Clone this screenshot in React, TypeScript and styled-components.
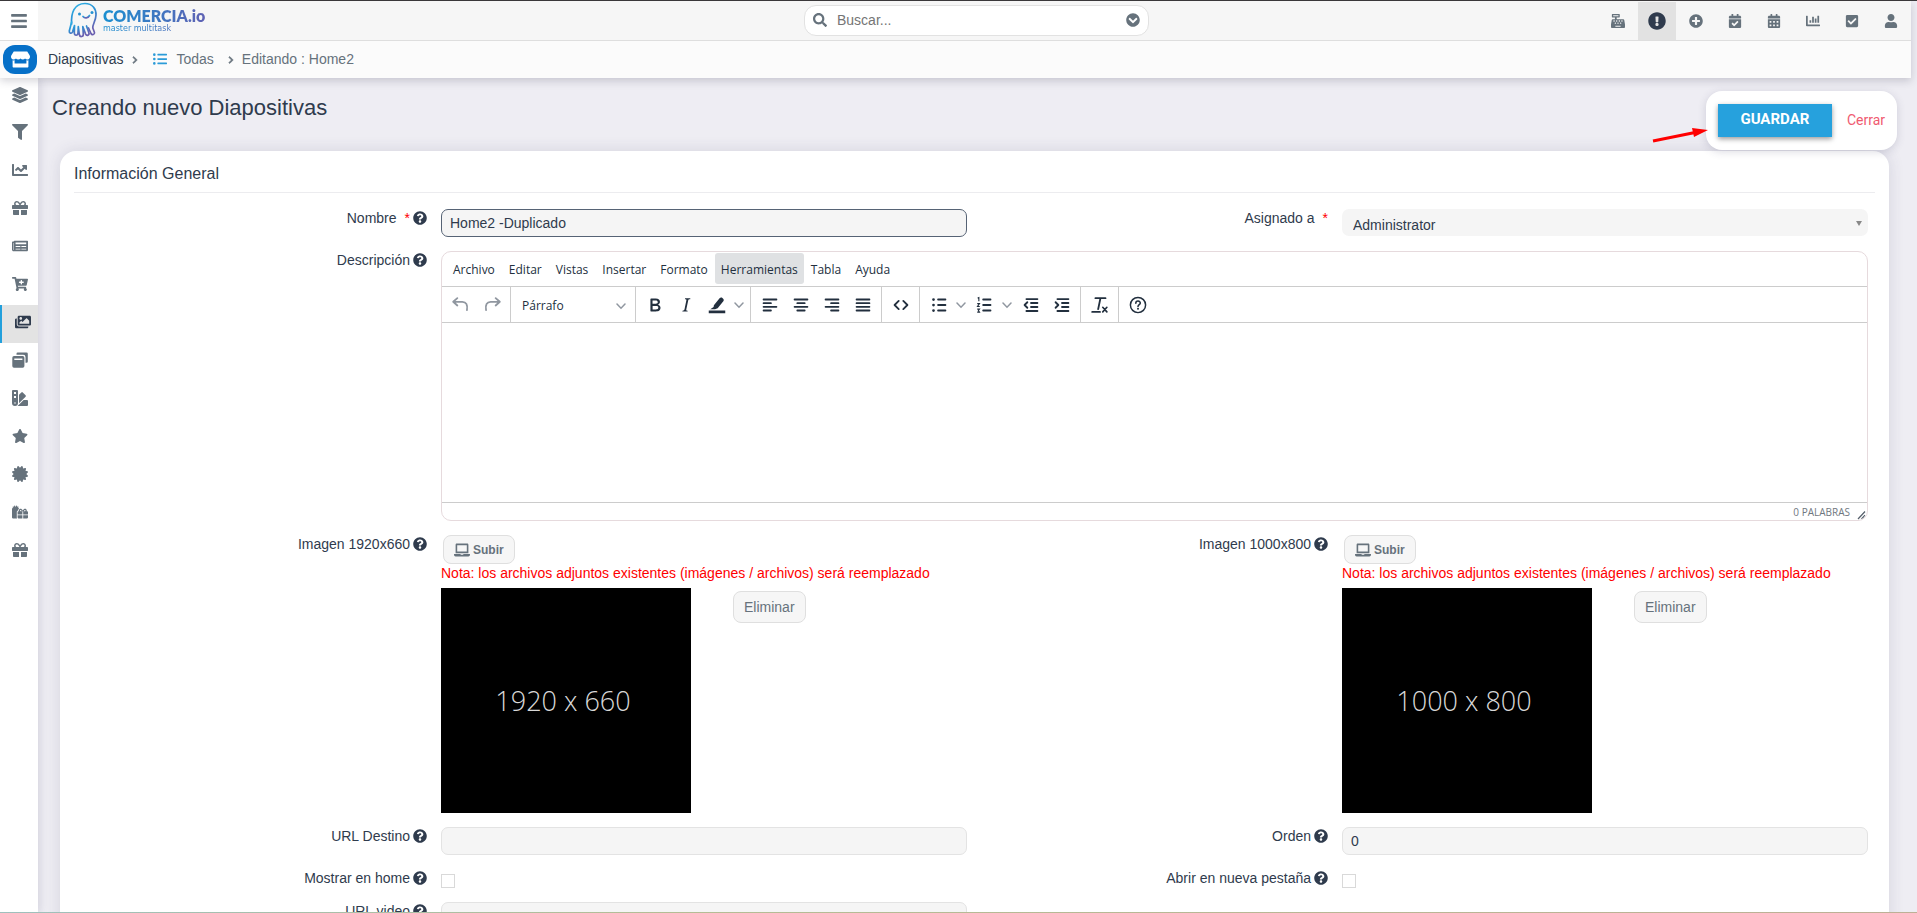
import React from 'react';
import styled, { createGlobalStyle } from 'styled-components';
import {
  FaBars, FaStore, FaLayerGroup, FaFilter, FaChartLine, FaGift, FaNewspaper, FaCartPlus, FaImages,
  FaSwatchbook, FaStar, FaCertificate, FaGifts, FaCashRegister, FaExclamationCircle, FaPlusCircle,
  FaCalendarCheck, FaCalendarAlt, FaChartBar, FaCheckSquare, FaUser, FaSearch, FaChevronCircleDown,
  FaChevronRight, FaListUl, FaQuestionCircle, FaLaptop,
} from 'react-icons/fa';

const sans = '"Liberation Sans", Arial, sans-serif';
const uiSans = '"Open Sans", "Noto Sans", sans-serif';
const ink = '#2f3b4d';
const slate = '#66727c';

const GlobalStyle = createGlobalStyle`
  *, *::before, *::after { box-sizing: border-box; }
  body { margin: 0; background: #eeedf3; color: ${ink}; font: 14px/18px ${sans}; }
  button, input, select, textarea { font: inherit; color: inherit; margin: 0; }
  button { cursor: pointer; }
  a { color: inherit; text-decoration: none; }
`;

const Shell = styled.div`
  display: flex;
  flex-direction: column;
  height: 100vh;
  overflow: hidden;
  border-top: 1px solid #3a383a;
`;

const Header = styled.header`
  position: relative;
  z-index: 3;
  margin-right: 6px;
  box-shadow: 0 3px 8px rgba(60, 60, 80, 0.22);
`;

const TopBar = styled.div`
  display: grid;
  grid-template-columns: 38px 1fr 349px 1fr;
  align-items: center;
  height: 40px;
  background: #f6f6f6;
  border-bottom: 1px solid #dedede;
`;

const MenuButton = styled.button`
  display: flex;
  align-items: center;
  justify-content: center;
  height: 39px;
  padding: 0;
  border: 0;
  background: #fff;
  color: ${slate};
  font-size: 18px;
`;

const Brand = styled.a`
  display: flex;
  align-items: center;
  gap: 5px;
  padding: 0 0 2px 30px;
`;

const BrandText = styled.span`
  display: flex;
  flex-direction: column;
  background: linear-gradient(90deg, #1a8fd0, #5f62b4);
  background-clip: text;
  -webkit-background-clip: text;
  color: transparent;
`;

const BrandName = styled.span`
  font: 800 16px/18px Lato, sans-serif;
`;

const BrandTag = styled.span`
  font: 8px/8px "DejaVu Sans", sans-serif;
`;

const Search = styled.form`
  display: flex;
  align-items: center;
  gap: 10px;
  height: 31px;
  margin-left: 4px;
  padding: 0 8px 1px;
  border: 1px solid #e2e2e2;
  border-radius: 12px;
  background: #fff;
  color: ${slate};
  font-size: 14px;
`;

const SearchInput = styled.input`
  flex: 1;
  min-width: 0;
  padding: 0;
  border: 0;
  outline: 0;
  background: transparent;
  &::placeholder { color: #757575; }
`;

const PlainButton = styled.button`
  display: flex;
  padding: 0;
  border: 0;
  background: transparent;
  color: ${slate};
  font-size: 14px;
`;

const Tools = styled.nav`
  display: flex;
  justify-content: flex-end;
  gap: 1px;
  height: 38px;
  padding-right: 1px;
`;

const ToolButton = styled.button<{ $active?: boolean }>`
  display: flex;
  align-items: center;
  justify-content: center;
  width: 38px;
  height: 38px;
  padding: 0;
  border: 0;
  background: ${(p) => (p.$active ? '#e2e2e2' : 'transparent')};
  color: ${(p) => (p.$active ? ink : slate)};
  font-size: ${(p) => (p.$active ? 18 : 14)}px;
`;

const CrumbBar = styled.nav`
  display: flex;
  align-items: center;
  height: 37px;
  padding-left: 3px;
  background: #fbfbfb;
  color: ${slate};
`;

const StoreBadge = styled.a`
  display: flex;
  align-items: center;
  justify-content: center;
  width: 34px;
  height: 29px;
  margin-right: 11px;
  border-radius: 12px;
  background: #0670c8;
  color: #fff;
  font-size: 19px;
`;

const Crumb = styled.a<{ $strong?: boolean }>`
  display: flex;
  align-items: center;
  gap: 9px;
  padding-bottom: 2px;
  color: ${(p) => (p.$strong ? ink : slate)};
  svg { color: #2b9bd8; }
`;

const CrumbArrow = styled(FaChevronRight)<{ $wide?: boolean }>`
  margin: 0 ${(p) => (p.$wide ? 14 : 7)}px 0 8px;
  font-size: 8px;
  stroke: currentColor;
  stroke-width: 40px;
  &:last-of-type { margin: 0 7px 0 13px; }
`;

const Body = styled.div`
  display: flex;
  flex: 1;
  min-height: 0;
`;

const SideBar = styled.nav`
  position: relative;
  z-index: 2;
  flex: 0 0 38px;
  background: #fff;
  box-shadow: 2px 0 8px rgba(60, 60, 100, 0.14);
`;

const SideLink = styled.a<{ $active?: boolean }>`
  display: flex;
  align-items: center;
  justify-content: center;
  height: 38px;
  padding: 0 0 4px ${(p) => (p.$active ? 6 : 2)}px;
  border-left: ${(p) => (p.$active ? '2px solid #23a0dc' : '0')};
  background: ${(p) => (p.$active ? '#e3e3e3' : 'transparent')};
  color: ${(p) => (p.$active ? ink : slate)};
  font-size: 16px;
  &:first-child { height: 37px; }
`;

const Main = styled.main`
  position: relative;
  flex: 1;
  min-width: 0;
  padding: 14px 28px 0 22px;
  overflow-y: auto;
  scrollbar-width: none;
`;

const PageTitle = styled.h1`
  margin: 0 0 0 -8px;
  padding: 3px 0 30px;
  font-size: 22px;
  line-height: 26px;
  font-weight: 400;
`;

const SaveBox = styled.div`
  position: absolute;
  z-index: 2;
  top: 13px;
  right: 20px;
  display: flex;
  align-items: center;
  gap: 15px;
  height: 59px;
  padding: 0 12px;
  border-radius: 16px;
  background: #fff;
  box-shadow: 0 2px 8px rgba(60, 60, 100, 0.18);
  font-family: Roboto, ${sans};
`;

const SaveButton = styled.button`
  height: 33px;
  width: 114px;
  padding: 0 0 3px;
  border: 0;
  background: #26a1dd;
  color: #fff;
  font-size: 15px;
  font-weight: 700;
  box-shadow: 0 2px 5px rgba(0, 0, 0, 0.4);
`;

const CloseLink = styled.a`
  padding-bottom: 2px;
  color: #f05a70;
`;

const Pointer = styled.svg`
  position: absolute;
  z-index: 3;
  top: 48px;
  right: 208px;
`;

const Card = styled.section`
  padding: 13px 14px 14px;
  min-height: 800px;
  border-radius: 16px 16px 0 0;
  background: #fff;
  box-shadow: 0 0 16px rgba(60, 60, 100, 0.14);
`;

const CardTitle = styled.h2`
  margin: 0 0 16px;
  padding-bottom: 8px;
  border-bottom: 1px solid #ececef;
  font-size: 16px;
  line-height: 20px;
  font-weight: 400;
`;

const Fields = styled.form`
  display: grid;
  grid-template-columns: 353px 1fr 347px 1fr;
  gap: 14px;
  padding-right: 7px;
`;

const LabelCell = styled.div`
  display: flex;
  justify-content: flex-end;
  align-items: center;
  height: 18px;
  gap: 3px;
  svg { font-size: 14px; }
`;

const Required = styled.span`
  padding-left: 5px;
  color: #f00;
`;

const TextInput = styled.input<{ $current?: boolean }>`
  width: 100%;
  height: 28px;
  padding: 0 8px;
  border: 1px solid ${(p) => (p.$current ? '#566375' : '#e3e3e3')};
  border-radius: 7px;
  outline: 0;
  background: #f5f5f5;
`;

const SelectWrap = styled.div`
  position: relative;
  height: 28px;
`;

const SelectInput = styled.select`
  width: 100%;
  height: 27px;
  padding: 4px 11px 0;
  border: 0;
  border-radius: 7px;
  background: #f5f5f5;
  appearance: none;
`;

const SelectArrow = styled.svg`
  position: absolute;
  top: 12px;
  right: 6px;
  pointer-events: none;
`;

const CheckInput = styled.input`
  appearance: none;
  width: 14px;
  height: 14px;
  margin-top: 5px;
  border: 1px solid #d9d9d9;
  background: #fff;
`;

const Editor = styled.div`
  grid-column: 2 / -1;
  display: flex;
  flex-direction: column;
  height: 270px;
  border: 1px solid #e6dadd;
  border-radius: 10px;
  overflow: hidden;
  color: #222f3e;
  font-family: ${uiSans};
  font-size: 12px;
`;

const EditorMenu = styled.div`
  display: flex;
  height: 35px;
  padding: 1px 4px 2px;
  border-bottom: 1px solid #cccccc;
`;

const EditorMenuItem = styled.button<{ $active?: boolean }>`
  padding: 3px ${(p) => (p.$active ? 6 : 7)}px 0;
  border: 0;
  border-radius: 3px;
  background: ${(p) => (p.$active ? '#dfe1e3' : 'transparent')};
`;

const EditorTools = styled.div`
  display: flex;
  height: 36px;
  border-bottom: 1px solid #cccccc;
`;

const ToolGroup = styled.div`
  display: flex;
  align-items: center;
  padding: 0 3px;
  border-right: 1px solid #cccccc;
  &:last-child { border: 0; }
`;

const EditorButton = styled.button<{ $muted?: boolean; $split?: boolean }>`
  display: flex;
  align-items: center;
  justify-content: ${(p) => (p.$split ? 'space-between' : 'center')};
  width: ${(p) => (p.$split ? 46 : 31)}px;
  height: 30px;
  padding: ${(p) => (p.$split ? '0 3px 0 5px' : '0')};
  border: 0;
  background: transparent;
  color: ${(p) => (p.$muted ? '#9097a0' : '#222f3e')};
`;

const BlockButton = styled.button`
  display: flex;
  align-items: center;
  justify-content: space-between;
  width: 118px;
  height: 30px;
  padding: 2px 6px 0 8px;
  border: 0;
  background: transparent;
`;

const EditorText = styled.textarea`
  flex: 1;
  padding: 8px;
  border: 0;
  outline: 0;
  resize: none;
  background: #fff;
`;

const EditorStatus = styled.div`
  display: flex;
  justify-content: flex-end;
  align-items: flex-end;
  gap: 7px;
  height: 18px;
  padding-right: 1px;
  border-top: 1px solid #cccccc;
  color: #6f7780;
  font-size: 10px;
  line-height: 15px;
`;

const UploadCell = styled.div`
  display: flex;
  flex-direction: column;
  align-items: flex-start;
`;

const SoftButton = styled.button<{ $upload?: boolean }>`
  display: flex;
  align-items: center;
  gap: 3px;
  height: ${(p) => (p.$upload ? 29 : 32)}px;
  margin: ${(p) => (p.$upload ? '0 2px' : '3px 0 0')};
  padding: 0 10px;
  border: 1px solid #dfdfdf;
  border-radius: 8px;
  background: #f6f6f6;
  color: ${slate};
  font-size: ${(p) => (p.$upload ? 12 : 14)}px;
  font-weight: ${(p) => (p.$upload ? 700 : 400)};
  svg { font-size: 16px; }
`;

const Note = styled.p`
  margin: 0 0 6px;
  color: #f00;
`;

const PreviewRow = styled.div`
  display: flex;
  align-items: flex-start;
  gap: 42px;
`;

const Preview = styled.div`
  display: flex;
  align-items: center;
  justify-content: center;
  width: 250px;
  height: 225px;
  padding-right: 6px;
  background: #000;
  color: #d8d8d8;
  font: 300 27px/36px "Open Sans", sans-serif;
`;

const BottomLine = styled.div`
  position: fixed;
  z-index: 4;
  left: 0;
  right: 0;
  bottom: 0;
  height: 1px;
  background: linear-gradient(90deg, #9fc0bd, #b4bd95 35%, #bdb096);
`;

const Logo = () => (
  <svg width="30" height="36" viewBox="0 0 30 36" fill="none" aria-hidden="true">
    <defs>
      <linearGradient id="ghost" x1="0" y1="0" x2="0.4" y2="1">
        <stop offset="0" stopColor="#2bb4e6" />
        <stop offset="0.5" stopColor="#2d8fd3" />
        <stop offset="1" stopColor="#6a5fb0" />
      </linearGradient>
    </defs>
    <g stroke="url(#ghost)" strokeWidth="1.7" strokeLinecap="round" strokeLinejoin="round">
      <path d="M3.6 22C3 11 6 1.5 17 1.5C24.500 1.500 28.300 7 28 13C27.800 19 24.500 22 24.800 26L26.500 30.500C26.800 32.500 24 33.500 23 31.500L20.500 26" />
      <path d="M3.600 20L1.300 29C1 31.500 3.700 32 4.500 30L6.500 23.500L6.300 31C6.500 34 9.700 34 10 31L10.300 24.500L11.300 32.500C11.800 35.500 15.500 35 15.300 32L14.800 24.500L17.500 31.800C18.800 34.500 21.800 33 20.800 30.500L18.500 24" />
      <path d="M15 14.500C16.500 16.500 20 16.500 21.500 13.500" />
    </g>
    <circle cx="11.500" cy="12" r="1.500" fill="#2492d2" />
    <circle cx="24" cy="10.500" r="1.500" fill="#2492d2" />
  </svg>
);

const StackedCards = () => (
  <svg width="16" height="16" viewBox="0 0 16 16" fill="currentColor" aria-hidden="true">
    <path d="M6 0.500H14.500A1.300 1.300 0 0 1 15.800 1.800V9.500A1.300 1.300 0 0 1 14.500 10.800H13.500V5A2.300 2.300 0 0 0 11.200 2.700H4.500V1.800A1.300 1.300 0 0 1 6 0.500Z" />
    <path fillRule="evenodd" d="M2 4H10.700A1.700 1.700 0 0 1 12.400 5.700V14A1.700 1.700 0 0 1 10.700 15.700H2A1.700 1.700 0 0 1 0.300 14V5.700A1.700 1.700 0 0 1 2 4ZM2.300 6.500V8H10.400V6.500Z" />
  </svg>
);

const Ico = ({ children }: { children: React.ReactNode }) => (
  <svg width="22" height="22" viewBox="0 0 24 24" fill="currentColor" aria-hidden="true">{children}</svg>
);

const Stroke = ({ d }: { d: string }) => (
  <Ico><path d={d} fill="none" stroke="currentColor" strokeWidth="2" strokeLinecap="round" strokeLinejoin="round" /></Ico>
);

const Caret = () => (
  <svg width="10" height="10" viewBox="0 0 10 10" fill="none" stroke="#9097a0" strokeWidth="1.500" aria-hidden="true">
    <path d="M1 3L5 7.200L9 3" strokeLinecap="round" />
  </svg>
);

const icons = {
  undo: <Stroke d="M8 4.500L3.500 8.500L8 12.500M4 8.500H13.500C17.500 8.500 19.500 11.500 18.500 17.500" />,
  redo: <Stroke d="M16 4.500L20.500 8.500L16 12.500M20 8.500H10.500C6.500 8.500 4.500 11.500 5.500 17.500" />,
  bold: <Ico><path d="M7.800 19c-.3 0-.5 0-.6-.2l-.2-.5V5.700c0-.2 0-.4.2-.5l.6-.2h5c1.500 0 2.700.3 3.500 1 .7.600 1.100 1.400 1.100 2.500a3 3 0 0 1-.6 1.900c-.4.600-1 1-1.600 1.200.4.100.900.300 1.300.600s.8.700 1 1.200c.4.400.5 1 .5 1.600 0 1.300-.4 2.300-1.300 3-.8.700-2.100 1-3.800 1H7.800Zm5-8.300c.6 0 1.200-.1 1.600-.5.400-.3.600-.7.600-1.300 0-1.100-.8-1.700-2.300-1.700H9.300v3.500h3.400Zm.5 6c.7 0 1.300-.1 1.700-.4.400-.4.600-.9.600-1.500s-.2-1-.7-1.400c-.4-.3-1-.4-2-.4H9.400v3.800h4Z" /></Ico>,
  italic: <Ico><path d="m16.700 4.700-.1.900h-.3c-.6 0-1 0-1.400.3-.3.300-.4.600-.5 1.100l-2.100 9.800v.6c0 .5.400.8 1.400.8h.2l-.2.800H8l.2-.8h.2c1.100 0 1.800-.5 2-1.500l2-9.800.1-.5c0-.6-.4-.8-1.400-.8h-.3l.2-.9h5.800Z" /></Ico>,
  marker: <Ico><path d="M3 18H21V21H3Z" /><path d="M8.600 12.200L14.800 4.600C15.600 3.700 17 3.600 17.900 4.400L18.700 5.100C19.500 5.800 19.600 7.100 18.900 8L12.700 15.500L9.900 16.700H4.600L8.300 14.200ZM9 11.800L13.200 15" /></Ico>,
  left: <Stroke d="M5 6H19M5 10H13M5 14H19M5 18H13" />,
  center: <Stroke d="M5 6H19M8 10H16M5 14H19M8 18H16" />,
  right: <Stroke d="M5 6H19M11 10H19M5 14H19M11 18H19" />,
  justify: <Stroke d="M5 6H19M5 10H19M5 14H19M5 18H19" />,
  code: <Stroke d="M9.500 7.500L5 12L9.500 16.500M14.500 7.500L19 12L14.500 16.500" />,
  bullets: <Ico><path d="M11 5h8a1 1 0 0 1 0 2h-8a1 1 0 0 1 0-2Zm0 6h8a1 1 0 0 1 0 2h-8a1 1 0 0 1 0-2Zm0 6h8a1 1 0 0 1 0 2h-8a1 1 0 0 1 0-2ZM4.500 6a1.500 1.500 0 1 1 3 0 1.500 1.500 0 0 1-3 0Zm0 6a1.500 1.500 0 1 1 3 0 1.500 1.500 0 0 1-3 0Zm0 6a1.500 1.500 0 1 1 3 0 1.500 1.500 0 0 1-3 0Z" /></Ico>,
  numbers: <Ico><path d="M10 17h8a1 1 0 0 1 0 2h-8a1 1 0 0 1 0-2Zm0-6h8a1 1 0 0 1 0 2h-8a1 1 0 0 1 0-2Zm0-6h8a1 1 0 1 1 0 2h-8a1 1 0 1 1 0-2Z" /><path d="M4 4.500L5.300 4V8M3.500 10.500H6L3.800 13.700H6.300M3.500 16.500H6L4.800 18L6 19.800H3.500" fill="none" stroke="currentColor" strokeWidth="1.200" /></Ico>,
  outdent: <Stroke d="M7 5.500H19M12 9.800H19M12 14.200H19M7 18.500H19M8 9L5 12L8 15" />,
  indent: <Stroke d="M7 5.500H19M12 9.800H19M12 14.200H19M7 18.500H19M5 9L8 12L5 15" />,
  clear: <Ico><path d="M7 4.500H18M12.500 4.500L10 16.500M3.500 19.500H12" fill="none" stroke="currentColor" strokeWidth="2" strokeLinecap="round" /><path d="M15 14.500L19.500 19.500M19.500 14.500L15 19.500" fill="none" stroke="currentColor" strokeWidth="1.800" strokeLinecap="round" /></Ico>,
  help: <Ico><circle cx="12" cy="12" r="8.300" fill="none" stroke="currentColor" strokeWidth="1.600" /><path d="M9.600 10C9.600 7 14.500 7 14.500 9.800C14.500 11.500 12 11.600 12 13.500" fill="none" stroke="currentColor" strokeWidth="1.700" strokeLinecap="round" /><circle cx="12" cy="16" r="1.100" /></Ico>,
};

type Tool = { label: string; icon: React.ReactNode; muted?: boolean; split?: boolean };

const toolsAfterBlock: Tool[][] = [
  [{ label: 'Negrita', icon: icons.bold }, { label: 'Cursiva', icon: icons.italic }, { label: 'Color de fondo', icon: icons.marker, split: true }],
  [{ label: 'Alinear a la izquierda', icon: icons.left }, { label: 'Centrar', icon: icons.center }, { label: 'Alinear a la derecha', icon: icons.right }, { label: 'Justificar', icon: icons.justify }],
  [{ label: 'Código fuente', icon: icons.code }],
  [{ label: 'Viñetas', icon: icons.bullets, split: true }, { label: 'Numeración', icon: icons.numbers, split: true }, { label: 'Reducir sangría', icon: icons.outdent }, { label: 'Aumentar sangría', icon: icons.indent }],
  [{ label: 'Borrar formato', icon: icons.clear }],
  [{ label: 'Ayuda', icon: icons.help }],
];

const EditorGroup = ({ tools }: { tools: Tool[] }) => (
  <ToolGroup>
    {tools.map((t) => (
      <EditorButton key={t.label} type="button" aria-label={t.label} $muted={t.muted} $split={t.split}>
        {t.icon}
        {t.split && <Caret />}
      </EditorButton>
    ))}
  </ToolGroup>
);

const FieldLabel = ({ id, text, required, help = true }: { id: string; text: string; required?: boolean; help?: boolean }) => (
  <LabelCell>
    <label htmlFor={id}>{text}</label>
    {required && <Required>*</Required>}
    {help && <FaQuestionCircle />}
  </LabelCell>
);

const ImageField = ({ id, size }: { id: string; size: string }) => (
  <UploadCell>
    <SoftButton id={id} type="button" $upload><FaLaptop />Subir</SoftButton>
    <Note>Nota: los archivos adjuntos existentes (imágenes / archivos) será reemplazado</Note>
    <PreviewRow>
      <Preview>{size}</Preview>
      <SoftButton type="button">Eliminar</SoftButton>
    </PreviewRow>
  </UploadCell>
);

const sideItems = [
  { label: 'Capas', icon: <FaLayerGroup /> },
  { label: 'Embudo', icon: <FaFilter /> },
  { label: 'Ventas', icon: <FaChartLine /> },
  { label: 'Promociones', icon: <FaGift /> },
  { label: 'Noticias', icon: <FaNewspaper /> },
  { label: 'Carritos', icon: <FaCartPlus /> },
  { label: 'Diapositivas', icon: <FaImages />, active: true },
  { label: 'Páginas', icon: <StackedCards /> },
  { label: 'Estilos', icon: <FaSwatchbook /> },
  { label: 'Favoritos', icon: <FaStar /> },
  { label: 'Marcas', icon: <FaCertificate /> },
  { label: 'Paquetes', icon: <FaGifts /> },
  { label: 'Regalos', icon: <FaGift /> },
];

const topTools = [
  { label: 'Caja', icon: <FaCashRegister /> },
  { label: 'Avisos', icon: <FaExclamationCircle />, active: true },
  { label: 'Crear', icon: <FaPlusCircle /> },
  { label: 'Citas', icon: <FaCalendarCheck /> },
  { label: 'Calendario', icon: <FaCalendarAlt /> },
  { label: 'Informes', icon: <FaChartBar /> },
  { label: 'Tareas', icon: <FaCheckSquare /> },
  { label: 'Usuario', icon: <FaUser /> },
];

const menuItems = ['Archivo', 'Editar', 'Vistas', 'Insertar', 'Formato', 'Herramientas', 'Tabla', 'Ayuda'];

export default function App() {
  return (
    <Shell>
      <GlobalStyle />
      <Header>
        <TopBar>
          <MenuButton type="button" aria-label="Menú"><FaBars /></MenuButton>
          <Brand href="#">
            <Logo />
            <BrandText>
              <BrandName>COMERCIA.io</BrandName>
              <BrandTag>master multitask</BrandTag>
            </BrandText>
          </Brand>
          <Search>
            <FaSearch />
            <SearchInput aria-label="Buscar" placeholder="Buscar..." />
            <PlainButton type="button" aria-label="Opciones de búsqueda"><FaChevronCircleDown /></PlainButton>
          </Search>
          <Tools>
            {topTools.map((t) => (
              <ToolButton key={t.label} type="button" aria-label={t.label} $active={t.active}>{t.icon}</ToolButton>
            ))}
          </Tools>
        </TopBar>
        <CrumbBar>
          <StoreBadge href="#" aria-label="Tienda"><FaStore /></StoreBadge>
          <Crumb href="#" $strong>Diapositivas</Crumb>
          <CrumbArrow $wide />
          <Crumb href="#"><FaListUl />Todas</Crumb>
          <CrumbArrow />
          <Crumb as="span">Editando : Home2</Crumb>
        </CrumbBar>
      </Header>
      <Body>
        <SideBar>
          {sideItems.map((s) => (
            <SideLink key={s.label} href="#" aria-label={s.label} $active={s.active}>{s.icon}</SideLink>
          ))}
        </SideBar>
        <Main>
          <PageTitle>Creando nuevo Diapositivas</PageTitle>
          <SaveBox>
            <SaveButton type="submit" form="slide">GUARDAR</SaveButton>
            <CloseLink href="#">Cerrar</CloseLink>
          </SaveBox>
          <Pointer width="58" height="18" viewBox="0 0 58 18" aria-hidden="true">
            <path d="M2 15L44 6.500" stroke="#f00" strokeWidth="3" />
            <path d="M57 4L41 2L43 11Z" fill="#f00" />
          </Pointer>
          <Card>
            <CardTitle>Información General</CardTitle>
            <Fields id="slide">
              <FieldLabel id="nombre" text="Nombre" required />
              <TextInput id="nombre" defaultValue="Home2 -Duplicado" $current />
              <FieldLabel id="asignado" text="Asignado a" required help={false} />
              <SelectWrap>
                <SelectInput id="asignado"><option>Administrator</option></SelectInput>
                <SelectArrow width="6" height="5" viewBox="0 0 6 5" aria-hidden="true"><path d="M0 0H6L3 5Z" fill="#888" /></SelectArrow>
              </SelectWrap>

              <FieldLabel id="descripcion" text="Descripción" />
              <Editor>
                <EditorMenu>
                  {menuItems.map((m) => (
                    <EditorMenuItem key={m} type="button" $active={m === 'Herramientas'}>{m}</EditorMenuItem>
                  ))}
                </EditorMenu>
                <EditorTools>
                  <EditorGroup tools={[{ label: 'Deshacer', icon: icons.undo, muted: true }, { label: 'Rehacer', icon: icons.redo, muted: true }]} />
                  <ToolGroup><BlockButton type="button">Párrafo<Caret /></BlockButton></ToolGroup>
                  {toolsAfterBlock.map((g) => <EditorGroup key={g[0].label} tools={g} />)}
                </EditorTools>
                <EditorText id="descripcion" />
                <EditorStatus>
                  0 PALABRAS
                  <svg width="9" height="9" viewBox="0 0 9 9" stroke="#555f6b" aria-hidden="true"><path d="M1 8L8 0.500M4.500 8L8 4.200" strokeWidth="1.200" /></svg>
                </EditorStatus>
              </Editor>

              <FieldLabel id="img1" text="Imagen 1920x660" />
              <ImageField id="img1" size="1920 x 660" />
              <FieldLabel id="img2" text="Imagen 1000x800" />
              <ImageField id="img2" size="1000 x 800" />

              <FieldLabel id="url" text="URL Destino" />
              <TextInput id="url" />
              <FieldLabel id="orden" text="Orden" />
              <TextInput id="orden" defaultValue="0" />

              <FieldLabel id="home" text="Mostrar en home" />
              <CheckInput id="home" type="checkbox" />
              <FieldLabel id="tab" text="Abrir en nueva pestaña" />
              <CheckInput id="tab" type="checkbox" />

              <FieldLabel id="video" text="URL video" />
              <TextInput id="video" />
            </Fields>
          </Card>
        </Main>
      </Body>
      <BottomLine />
    </Shell>
  );
}
